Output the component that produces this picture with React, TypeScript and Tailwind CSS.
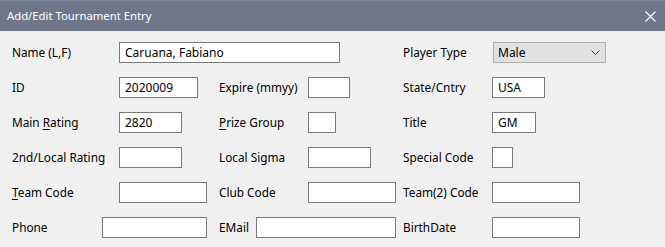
import React from "react";

const font = { fontFamily: '"Noto Sans", "Segoe UI", sans-serif' };

type BoxProps = { w: string; value?: string; ml?: string };

const Box = ({ w, value = "", ml = "" }: BoxProps) => (
    <div className={`${w} ${ml} h-[21px] border border-[#7a7a7a] bg-white pl-[5px] flex items-center text-[12px] text-black leading-none`}>
        {value}
    </div>
);

const Label = ({ w, ml = "", children }: { w: string; ml?: string; children: React.ReactNode }) => (
    <span className={`${w} ${ml} shrink-0 text-[11.8px] text-black leading-none`}>{children}</span>
);

const U = ({ children }: { children: React.ReactNode }) => (
    <span className="underline underline-offset-2">{children}</span>
);

const App = () => {
    return (
        <div className="w-[665px] h-[247px] bg-[#f0f0f0] overflow-hidden" style={font}>
            <div className="h-[31px] bg-[#6e7789] border-t border-[#7b8396] flex items-center justify-between pl-[7px] pr-[10px]">
                <span className="text-white text-[11.3px] leading-none">Add/Edit Tournament Entry</span>
                <svg width="11" height="11" viewBox="0 0 11 11" className="mr-[-1px]">
                    <path d="M0.5 0.5 L10.5 10.5 M10.5 0.5 L0.5 10.5" stroke="#ffffff" strokeWidth="1.1" fill="none" />
                </svg>
            </div>

            <div className="flex flex-col gap-[14px] pt-[11px] pl-[12px]">
                <div className="flex items-center">
                    <Label w="w-[107px]">Name (L,F)</Label>
                    <Box w="w-[221px]" value="Caruana, Fabiano" />
                    <Label w="w-[90px]" ml="ml-[63px]">Player Type</Label>
                    <div className="w-[113px] h-[21px] border border-[#adadad] bg-[#e1e1e1] flex items-center justify-between pl-[4px] pr-[5px] text-[12px] leading-none">
                        <span>Male</span>
                        <svg width="9" height="5" viewBox="0 0 9 5">
                            <path d="M0.5 0.5 L4.5 4.5 L8.5 0.5" stroke="#404040" strokeWidth="1" fill="none" />
                        </svg>
                    </div>
                </div>

                <div className="flex items-center">
                    <Label w="w-[107px]">ID</Label>
                    <Box w="w-[79px]" value="2020009" />
                    <Label w="w-[89px]" ml="ml-[21px]">Expire (mmyy)</Label>
                    <Box w="w-[42px]" />
                    <Label w="w-[89px]" ml="ml-[53px]">State/Cntry</Label>
                    <Box w="w-[53px]" value="USA" />
                </div>

                <div className="flex items-center">
                    <Label w="w-[107px]">Main <U>R</U>ating</Label>
                    <Box w="w-[63px]" value="2820" />
                    <Label w="w-[89px]" ml="ml-[37px]"><U>P</U>rize Group</Label>
                    <Box w="w-[28px]" />
                    <Label w="w-[89px]" ml="ml-[67px]">Title</Label>
                    <Box w="w-[44px]" value="GM" />
                </div>

                <div className="flex items-center">
                    <Label w="w-[107px]">2nd/Local Rating</Label>
                    <Box w="w-[63px]" />
                    <Label w="w-[89px]" ml="ml-[37px]">Local Sigma</Label>
                    <Box w="w-[63px]" />
                    <Label w="w-[89px]" ml="ml-[32px]">Special Code</Label>
                    <Box w="w-[21px]" />
                </div>

                <div className="flex items-center">
                    <Label w="w-[107px]"><U>T</U>eam Code</Label>
                    <Box w="w-[88px]" />
                    <Label w="w-[89px]" ml="ml-[12px]">Club Code</Label>
                    <Box w="w-[88px]" />
                    <Label w="w-[89px]" ml="ml-[7px]">Team(2) Code</Label>
                    <Box w="w-[88px]" />
                </div>

                <div className="flex items-center">
                    <Label w="w-[90px]">Phone</Label>
                    <Box w="w-[105px]" />
                    <Label w="w-[37px]" ml="ml-[12px]">EMail</Label>
                    <Box w="w-[140px]" />
                    <Label w="w-[89px]" ml="ml-[7px]">BirthDate</Label>
                    <Box w="w-[88px]" />
                </div>
            </div>
        </div>
    );
};

export default App;
